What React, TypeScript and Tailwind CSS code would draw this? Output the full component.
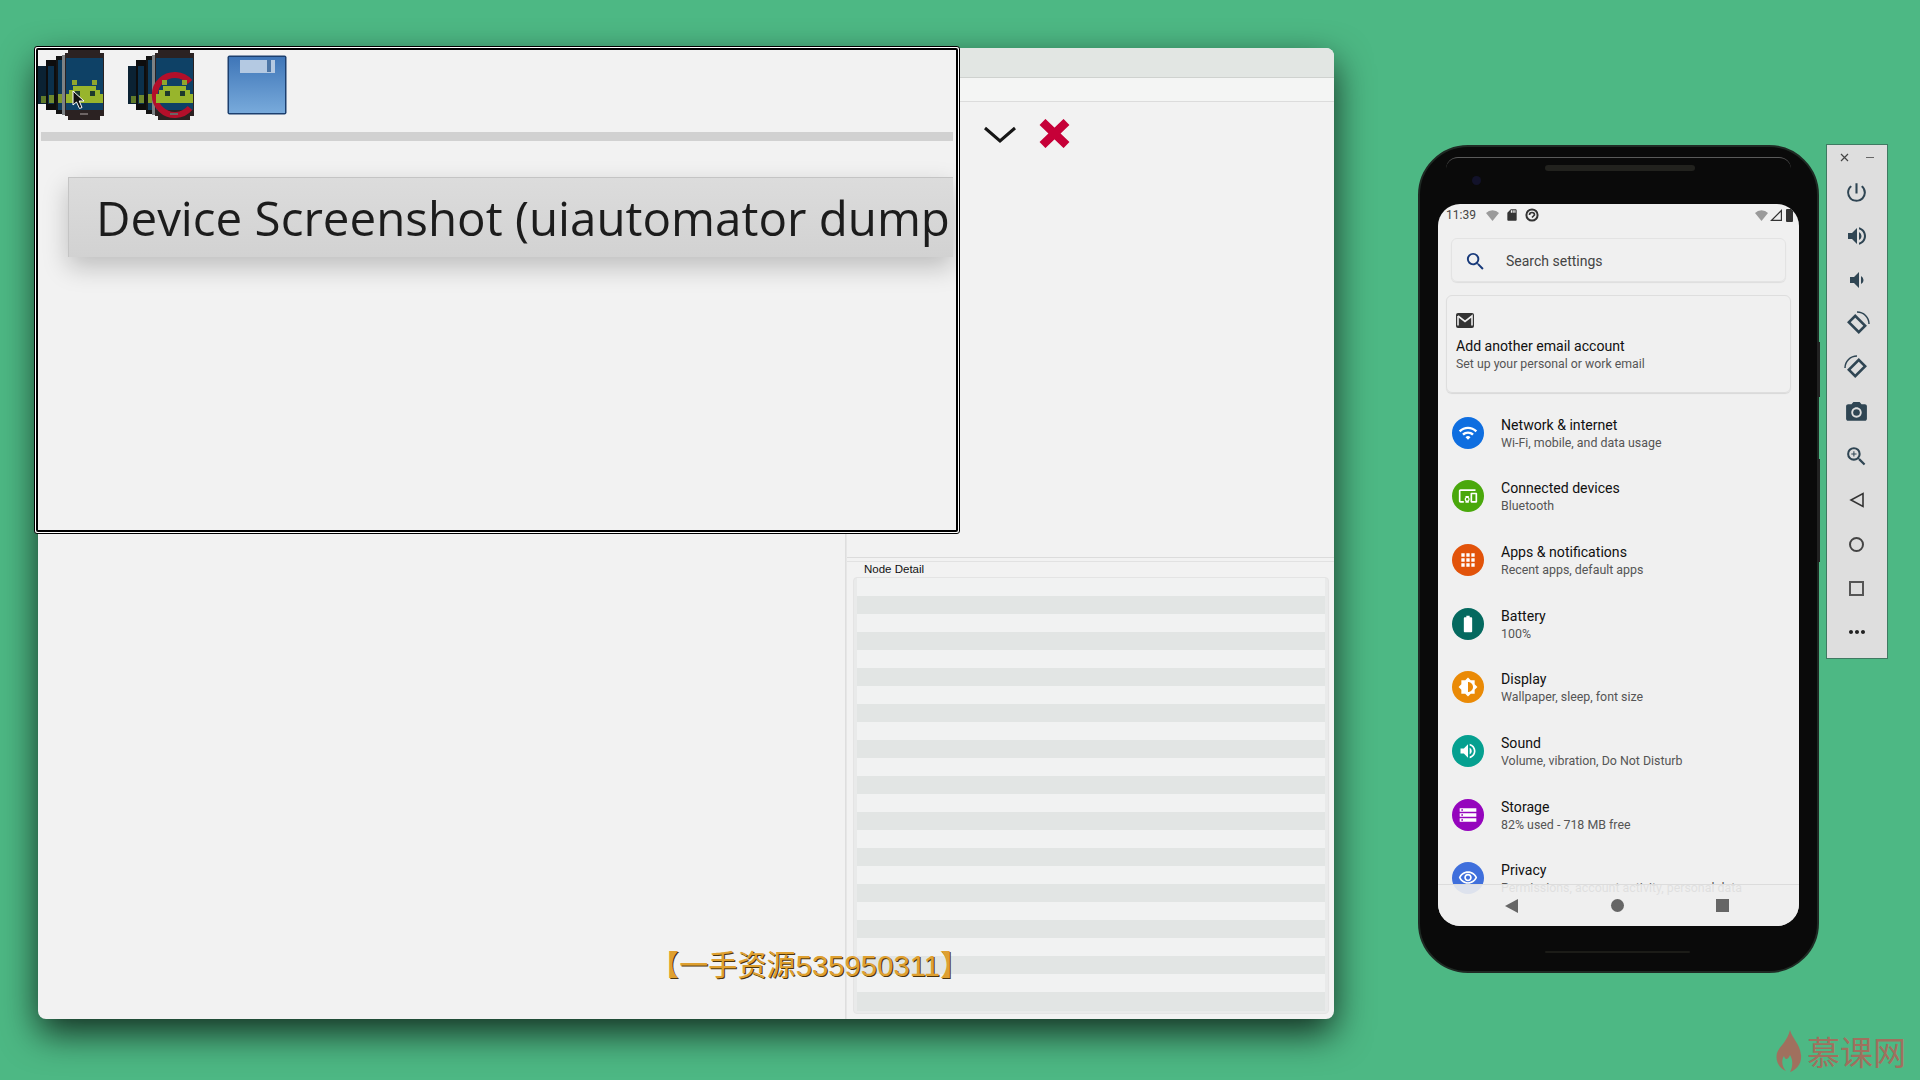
import {
  MdBatteryFull,
  MdBrightness6,
  MdDevicesOther,
  MdMoreHoriz,
  MdOutlineVisibility,
  MdOutlineZoomIn,
  MdPhotoCamera,
  MdPowerSettingsNew,
  MdSdCard,
  MdSearch,
  MdStorage,
  MdVolumeDown,
  MdVolumeUp,
  MdWifi,
  MdApps,
} from "react-icons/md";

const settings = [
  { title: "Network & internet", sub: "Wi-Fi, mobile, and data usage", bg: "bg-[#0e6ee0]", Icon: MdWifi },
  { title: "Connected devices", sub: "Bluetooth", bg: "bg-[#4aa80c]", Icon: MdDevicesOther },
  { title: "Apps & notifications", sub: "Recent apps, default apps", bg: "bg-[#e2530a]", Icon: MdApps },
  { title: "Battery", sub: "100%", bg: "bg-[#04695f]", Icon: MdBatteryFull },
  { title: "Display", sub: "Wallpaper, sleep, font size", bg: "bg-[#ea8a06]", Icon: MdBrightness6 },
  { title: "Sound", sub: "Volume, vibration, Do Not Disturb", bg: "bg-[#05a090]", Icon: MdVolumeUp },
  { title: "Storage", sub: "82% used - 718 MB free", bg: "bg-[#9505bd]", Icon: MdStorage },
  { title: "Privacy", sub: "Permissions, account activity, personal data", bg: "bg-[#3f6fdc]", Icon: MdOutlineVisibility },
];

const stripes = Array.from({ length: 23 }, (_, i) => i);

const Android = ({ x }: { x: number }) => (
  <g>
    <rect x={x + 6} y={30} width={5} height={5} fill="#8fa62e" />
    <rect x={x + 26} y={30} width={5} height={5} fill="#8fa62e" />
    <path
      d={`M${x} 53 V44 H${x + 3} V40 H${x + 7} V36 H${x + 30} V40 H${x + 34} V44 H${x + 37} V53 Z`}
      fill="#98b52c"
    />
    <rect x={x + 9} y={41} width={5} height={5} fill="#1d3a2c" />
    <rect x={x + 24} y={41} width={5} height={5} fill="#1d3a2c" />
  </g>
);

const DeviceIcon = ({ blocked }: { blocked?: boolean }) => (
  <svg width="68" height="70" viewBox="0 0 68 70" className="shrink-0">
    <rect x="0" y="16" width="10" height="38" fill="#0b2233" />
    <rect x="8" y="10" width="10" height="50" fill="#0d0d0d" />
    <rect x="10" y="16" width="6" height="38" fill="#0b304b" />
    <rect x="18" y="6" width="8" height="58" fill="#141414" />
    <rect x="20" y="10" width="5" height="50" fill="#0e3b5a" />
    <rect x="3" y="46" width="5" height="7" fill="#5f7a2a" />
    <rect x="11" y="45" width="5" height="8" fill="#6f8a2e" />
    <rect x="20" y="44" width="5" height="9" fill="#7f982e" />
    <rect x="24" y="5" width="3" height="60" fill="#7d8285" />
    <path d="M30 0 H62 V3 H66 V66 H62 V70 H30 V66 H27 V3 H30 Z" fill="#2b2222" />
    <rect x="28" y="8" width="37" height="52" fill="#0e4166" />
    {blocked && <path d="M62 32 A20 20 0 1 0 62 58" fill="none" stroke="#b30f2a" strokeWidth="6" />}
    <Android x={28} />
    <rect x="42" y="63" width="8" height="2" fill="#6d6464" />
  </svg>
);

const FloppyIcon = () => (
  <svg width="60" height="60" viewBox="0 0 60 60" className="mt-[5px] shrink-0">
    <defs>
      <linearGradient id="floppy" x1="0" y1="0" x2="0" y2="1">
        <stop offset="0" stopColor="#3f76b8" />
        <stop offset="1" stopColor="#78aadb" />
      </linearGradient>
    </defs>
    <rect x="0.5" y="0.5" width="59" height="59" rx="2" fill="#1c3f6e" />
    <rect x="2" y="2" width="56" height="56" fill="url(#floppy)" />
    <rect x="13" y="5" width="35" height="13" fill="#b4c9e2" />
    <rect x="40" y="5" width="4" height="12" fill="#4d76a6" />
  </svg>
);

const RotateIcon = ({ flip }: { flip?: boolean }) => (
  <svg width="26" height="26" viewBox="0 0 26 26" fill="none" stroke="#2f4553">
    <g transform={flip ? "rotate(-90 13 13)" : undefined}>
      <rect x="6" y="8.5" width="14" height="9" strokeWidth="2.6" transform="rotate(45 13 13)" />
      <path d="M13 1 A12 12 0 0 1 25 13" strokeWidth="1.5" />
    </g>
  </svg>
);

const ToolButton = ({ children }: { children: React.ReactNode }) => (
  <div className="flex h-[44px] items-center justify-center pr-px">{children}</div>
);

const WedgeWifi = () => (
  <svg width="13" height="11" viewBox="0 0 13 11">
    <path d="M0 3 A9 9 0 0 1 13 3 L6.5 11 Z" fill="#9a9a9a" />
  </svg>
);

const App = () => {
  return (
    <div className="relative h-screen w-screen overflow-hidden bg-[#4db884] font-['Liberation_Sans',sans-serif]">
      {/* main window */}
      <div className="absolute left-[38px] top-[48px] flex h-[971px] w-[1296px] flex-col overflow-hidden rounded-lg bg-[#f2f2f2] shadow-[0_14px_36px_rgba(0,0,0,0.75)]">
        <div className="h-[30px] shrink-0 border-b border-[#cfd2cf] bg-[#e2e6e3]" />
        <div className="h-[24px] shrink-0 border-b border-[#dcdcdc] bg-[#f4f5f4]" />
        <div className="flex min-h-0 flex-1">
          <div className="w-[808px] shrink-0 border-r border-[#dedede]" />
          <div className="flex min-w-0 flex-1 flex-col border-l border-[#e6e6e6]">
            <div className="flex h-[456px] shrink-0 items-start gap-[23px] border-b border-[#dcdcdc] pl-[137px] pt-[17px]">
              <svg width="32" height="18" viewBox="0 0 32 18" fill="none" stroke="#161616" strokeWidth="3" className="mt-[7px]">
                <path d="M1 2 L16 15 L31 2" />
              </svg>
              <svg width="31" height="29" viewBox="0 0 31 29" fill="none" stroke="#c60038" strokeWidth="8.5">
                <path d="M3.5 3 L27.5 26 M27.5 3 L3.5 26" />
              </svg>
            </div>
            <div className="mt-[3px] flex min-h-0 flex-1 flex-col border-t border-[#e2e2e2] pl-[6px] pr-[5px]">
              <div className="h-[15px] shrink-0 pl-[11px] text-[11.5px] leading-[15px] text-[#111]">Node Detail</div>
              <div className="mb-[5px] flex min-h-0 flex-1 flex-col rounded border border-[#e4e4e4] bg-[#e9eaea] px-[3px] pb-[2px]">
                {stripes.map((i) => (
                  <div key={i} className={i % 2 === 0 ? "h-[18px] shrink-0 bg-[#f1f2f2]" : "h-[18px] shrink-0 bg-[#e2e5e4]"} />
                ))}
                <div className="min-h-0 flex-1 bg-[#e2e5e4]" />
              </div>
            </div>
          </div>
        </div>
      </div>

      {/* zoomed overlay */}
      <div className="absolute left-[34px] top-[46px] h-[488px] w-[926px] rounded-[3px] border border-black bg-white p-px">
        <div className="flex h-full flex-col overflow-hidden rounded-[2px] border-2 border-black bg-[#f2f2f2]">
          <div className="relative flex h-[82px] shrink-0 items-start">
            <DeviceIcon />
            <div className="w-[22px] shrink-0" />
            <DeviceIcon blocked />
            <div className="w-[31px] shrink-0" />
            <FloppyIcon />
            <svg width="14" height="20" viewBox="0 0 14 20" className="absolute left-[34px] top-[40px]">
              <path d="M1 1 V15 L4.5 12 L7.5 18.5 L10 17.5 L7.2 11 H12 Z" fill="#111" stroke="#fff" strokeWidth="1" />
            </svg>
          </div>
          <div className="mx-[3px] h-[9px] shrink-0 bg-[#d1d1d1]" />
          <div className="ml-[30px] mr-[3px] mt-[36px] flex h-[80px] shrink-0 items-center overflow-hidden border-l border-t border-[#c4c4c4] bg-gradient-to-b from-[#dcdcdc] to-[#d2d2d2] pl-[27px] shadow-[0_10px_24px_rgba(0,0,0,0.22)]">
            <span className="whitespace-nowrap pt-px font-['Open_Sans',sans-serif] text-[47.5px] font-medium text-[#1c1c1c] blur-[0.4px]">
              Device Screenshot (uiautomator dump
            </span>
          </div>
        </div>
      </div>

      {/* phone */}
      <div className="absolute left-[1418px] top-[145px] flex h-[828px] w-[401px] flex-col rounded-[50px] border-2 border-[#1f2a24] bg-[#0a0a0a] px-[18px] pt-[57px]">
        <div className="absolute left-[26px] right-[26px] top-[10px] h-[12px] rounded-t-[40px] border-t border-[#5a5a5a]" />
        <div className="absolute left-[125px] top-[18px] h-[6px] w-[150px] rounded-full bg-[#22221e]" />
        <div className="absolute left-[52px] top-[29px] h-[9px] w-[9px] rounded-full bg-[#12122a]" />
        <div className="absolute bottom-[18px] left-[125px] h-[2px] w-[145px] rounded-full bg-[#1c1c18]" />
        <div className="absolute -right-[3px] top-[195px] h-[55px] w-[3px] bg-[#222]" />
        <div className="absolute -right-[3px] top-[312px] h-[103px] w-[3px] bg-[#222]" />
        <div className="relative flex h-[722px] flex-col overflow-hidden rounded-[22px] bg-[#f0f0f0] font-['Roboto',sans-serif]">
          <div className="flex h-[22px] shrink-0 items-center justify-between pl-[8px] pr-[6px]">
            <div className="flex items-center gap-[6px]">
              <span className="mr-[4px] text-[12px] text-[#444]">11:39</span>
              <WedgeWifi />
              <MdSdCard className="h-[14px] w-[14px] text-[#333]" />
              <svg width="14" height="14" viewBox="0 0 14 14" fill="none" stroke="#333" strokeWidth="2">
                <circle cx="7" cy="7" r="5.6" />
                <path d="M4.5 7 A2.5 2.5 0 0 1 9.5 7 L7 9.5" strokeWidth="1.6" />
              </svg>
            </div>
            <div className="flex items-center gap-[2px]">
              <WedgeWifi />
              <svg width="12" height="12" viewBox="0 0 12 12">
                <path d="M0 12 L12 0 V12 Z M3 10.8 H10.8 V3 Z" fillRule="evenodd" fill="#333" />
              </svg>
              <div className="ml-[2px] h-[13px] w-[7px] rounded-[1px] bg-[#333]" />
            </div>
          </div>

          <div className="mx-[13px] mt-[12px] flex h-[44px] shrink-0 items-center rounded-md border border-[#e3e3e3] pl-[12px] pt-[2px] shadow-[0_1px_1px_rgba(0,0,0,0.08)]">
            <MdSearch className="h-[23px] w-[23px] text-[#17397a]" />
            <span className="ml-[19px] text-[14px] text-[#444]">Search settings</span>
          </div>

          <div className="mx-[8px] mt-[13px] h-[98px] shrink-0 rounded-md border border-[#dedede] px-[9px] pt-[17px] shadow-[0_1px_1px_rgba(0,0,0,0.1)]">
            <svg width="18" height="15" viewBox="0 0 18 15">
              <rect width="18" height="15" rx="2" fill="#333" />
              <path d="M2 3 L9 8.5 L16 3 V12.5" fill="none" stroke="#eee" strokeWidth="1.6" />
              <path d="M2 3 V12.5" fill="none" stroke="#eee" strokeWidth="1.6" />
            </svg>
            <div className="mt-[9px] text-[14.1px] leading-[18px] text-[#111]">Add another email account</div>
            <div className="pt-px text-[12.3px] leading-[17px] text-[#555]">Set up your personal or work email</div>
          </div>

          <div className="mt-[8px] flex flex-col">
            {settings.map(({ title, sub, bg, Icon }) => (
              <div key={title} className="flex h-[63.67px] shrink-0 items-center gap-[17px] pl-[14px]">
                <div className={`flex h-8 w-8 shrink-0 items-center justify-center rounded-full text-white ${bg}`}>
                  <Icon className="h-[20px] w-[20px]" />
                </div>
                <div className="pt-[2px]">
                  <div className="text-[14.1px] leading-[17px] text-[#111]">{title}</div>
                  <div className="text-[12.4px] leading-[17px] text-[#555]">{sub}</div>
                </div>
              </div>
            ))}
          </div>

          <div className="absolute inset-x-0 bottom-0 flex h-[42px] items-center justify-between border-t border-[#dcdcdc] bg-[#eeeeee]/90 pl-[67px] pr-[70px]">
            <div className="h-0 w-0 border-y-[7px] border-r-[13px] border-y-transparent border-r-[#666]" />
            <div className="h-[13px] w-[13px] rounded-full bg-[#666]" />
            <div className="h-[13px] w-[13px] bg-[#666]" />
          </div>
        </div>
      </div>

      {/* emulator side toolbar */}
      <div className="absolute left-[1826px] top-[144px] flex h-[515px] w-[62px] flex-col border border-[#3f7a62] bg-[#dedede] text-[#2f4553]">
        <div className="flex h-[25px] shrink-0 items-center justify-between px-[13px] text-[#444]">
          <svg width="9" height="9" viewBox="0 0 9 9" stroke="#444" strokeWidth="1.2">
            <path d="M1 1 L8 8 M8 1 L1 8" />
          </svg>
          <div className="h-[1.5px] w-[8px] bg-[#666]" />
        </div>
        <ToolButton>
          <MdPowerSettingsNew className="h-[25px] w-[25px]" />
        </ToolButton>
        <ToolButton>
          <MdVolumeUp className="h-[24px] w-[24px]" />
        </ToolButton>
        <ToolButton>
          <MdVolumeDown className="h-[24px] w-[24px]" />
        </ToolButton>
        <ToolButton>
          <RotateIcon />
        </ToolButton>
        <ToolButton>
          <RotateIcon flip />
        </ToolButton>
        <ToolButton>
          <MdPhotoCamera className="h-[25px] w-[25px]" />
        </ToolButton>
        <ToolButton>
          <MdOutlineZoomIn className="h-[25px] w-[25px]" />
        </ToolButton>
        <ToolButton>
          <svg width="16" height="16" viewBox="0 0 16 16" fill="none" stroke="#333" strokeWidth="1.6">
            <path d="M14 1.5 V14.5 L2 8 Z" />
          </svg>
        </ToolButton>
        <ToolButton>
          <div className="h-[15px] w-[15px] rounded-full border-2 border-[#444]" />
        </ToolButton>
        <ToolButton>
          <div className="h-[15px] w-[15px] border-2 border-[#555]" />
        </ToolButton>
        <ToolButton>
          <MdMoreHoriz className="h-[24px] w-[24px] text-[#222]" />
        </ToolButton>
      </div>

      {/* video subtitle */}
      <div className="absolute left-[650px] top-[947px] whitespace-nowrap font-['Liberation_Sans','Noto_Sans_CJK_SC',sans-serif] text-[29px] leading-[38px] tracking-[0.15px] text-[#dfa030] [text-shadow:1px_1px_0_#4a3510]">
        【一手资源535950311】
      </div>

      {/* watermark */}
      <div className="absolute left-[1776px] top-[1030px] flex items-center gap-[5px] text-[#a0705e]">
        <svg width="26" height="42" viewBox="0 0 26 42" fill="currentColor">
          <path d="M14 0 C16 8 24 14 25 25 C26 34 20 40 14 42 C17 36 17 30 14 25 C12 30 9 30 8 26 C5 30 6 37 10 41 C3 38 -1 31 1 23 C3 17 11 12 14 0 Z" />
        </svg>
        <span className="font-['Noto_Sans_CJK_SC',sans-serif] text-[33px] leading-none">慕课网</span>
      </div>
    </div>
  );
};

export default App;
